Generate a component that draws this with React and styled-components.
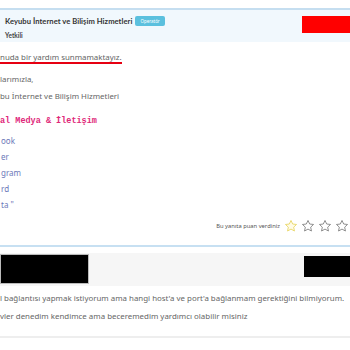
import React from 'react';
import styled, { createGlobalStyle } from 'styled-components';

const GlobalStyle = createGlobalStyle`
  html, body {
    margin: 0;
    padding: 0;
    background: #fff;
    width: 350px;
    height: 350px;
    overflow: hidden;
  }
  body {
    font-family: 'Noto Sans', 'Open Sans', sans-serif;
  }
`;

const Page = styled.div`
  width: 350px;
  height: 350px;
  overflow: hidden;
  padding-top: 8px;
  box-sizing: border-box;
`;

const Card = styled.div`
  border-top: 2px solid ${p => p.top};
  border-bottom: 2px solid ${p => p.bottom || 'transparent'};
`;

const Header = styled.div`
  display: flex;
  justify-content: space-between;
  align-items: flex-start;
  background: ${p => p.bg};
  height: ${p => p.h}px;
  padding: ${p => p.pad};
  box-sizing: border-box;
  margin-top: ${p => p.mt || 0}px;
`;

const Who = styled.div`
  display: flex;
  flex-direction: column;
  gap: 6px;
`;

const TitleRow = styled.div`
  display: flex;
  align-items: center;
  gap: 3px;
`;

const Name = styled.span`
  font-family: 'Lato', sans-serif;
  font-size: 7.6px;
  font-weight: 700;
  color: #333;
  letter-spacing: 0.05px;
`;

const Badge = styled.span`
  background: #5bc0de;
  color: #fff;
  font-size: 4.5px;
  padding: 2px 5px;
  border-radius: 2px;
  line-height: 6px;
`;

const Role = styled.span`
  font-family: 'Lato', sans-serif;
  font-size: 6.5px;
  font-weight: 700;
  color: #444;
`;

const Block = styled.div`
  width: ${p => p.w}px;
  height: ${p => p.h}px;
  background: ${p => p.color};
  margin-top: ${p => p.mt || 0}px;
  box-shadow: ${p => p.ring ? '0 0 0 1px #bbb' : 'none'};
`;

const Body = styled.div`
  display: flex;
  flex-direction: column;
  padding: ${p => p.pad};
`;

const Line = styled.div`
  font-size: 7.9px;
  color: #666;
  height: ${p => p.h || 16}px;
  line-height: 16px;
  white-space: nowrap;
`;

const Underlined = styled.span`
  display: inline-block;
  border-bottom: 2.5px solid #e60012;
  line-height: 10px;
`;

const Heading = styled.div`
  font-family: 'Liberation Mono', 'DejaVu Sans Mono', monospace;
  font-weight: 700;
  font-size: 8.5px;
  color: #e0287a;
  height: 24px;
  line-height: 24px;
  margin-top: 5px;
`;

const LinkLine = styled.div`
  font-size: 8px;
  color: #6b78b8;
  height: 16px;
  line-height: 16px;
  padding-left: 1px;
`;

const Rating = styled.div`
  display: flex;
  justify-content: flex-end;
  align-items: center;
  gap: 3px;
  padding: 6px 1px 12px 0;
`;

const RateText = styled.span`
  font-size: 5.8px;
  color: #555;
  margin-right: 1px;
`;

const Star = ({ color, fill }) => (
  <svg width="14" height="14" viewBox="0 0 24 24" fill={fill} stroke={color} strokeWidth="1.4" strokeLinejoin="round">
    <path d="M12 2.5l2.9 6.1 6.6.8-4.9 4.6 1.3 6.6L12 17.3l-5.9 3.3 1.3-6.6-4.9-4.6 6.6-.8z" />
  </svg>
);

export default function App() {
  return (
    <Page>
      <GlobalStyle />
      <Card top="#c5def0" bottom="#c7e0f2">
        <Header bg="#f1f8fd" h={32} pad="6px 0 0 5px">
          <Who>
            <TitleRow>
              <Name>Keyubu İnternet ve Bilişim Hizmetleri</Name>
              <Badge>Operatör</Badge>
            </TitleRow>
            <Role>Yetkili</Role>
          </Who>
          <Block w={48} h={17} color="#ff0000" />
        </Header>
        <Body pad="7px 0 0 0">
          <Line h={22}><Underlined>nuda bir yardım sunmamaktayız.</Underlined></Line>
          <Line h={17}>larımızla,</Line>
          <Line>bu İnternet ve Bilişim Hizmetleri</Line>
          <Heading>al Medya &amp; İletişim</Heading>
          <LinkLine>ook</LinkLine>
          <LinkLine>er</LinkLine>
          <LinkLine>gram</LinkLine>
          <LinkLine>rd</LinkLine>
          <LinkLine>ta "</LinkLine>
          <Rating>
            <RateText>Bu yanıta puan verdiniz</RateText>
            <Star color="#e6d35a" fill="#fffbe6" />
            <Star color="#777" fill="none" />
            <Star color="#777" fill="none" />
            <Star color="#777" fill="none" />
          </Rating>
        </Body>
      </Card>
      <Card top="transparent" bottom="#eeeeee">
        <Header bg="#f6f6f6" h={33} pad="2px 0 0 1px" mt={4}>
          <Block w={87} h={28} color="#000" ring />
          <Block w={46} h={21} color="#000" mt={1} />
        </Header>
        <Body pad="4px 0 10px 0">
          <Line h={18}>l bağlantısı yapmak istiyorum ama hangi host'a ve port'a bağlanmam gerektiğini bilmiyorum.</Line>
          <Line h={18}>vler denedim kendimce ama beceremedim yardımcı olabilir misiniz</Line>
        </Body>
      </Card>
    </Page>
  );
}
